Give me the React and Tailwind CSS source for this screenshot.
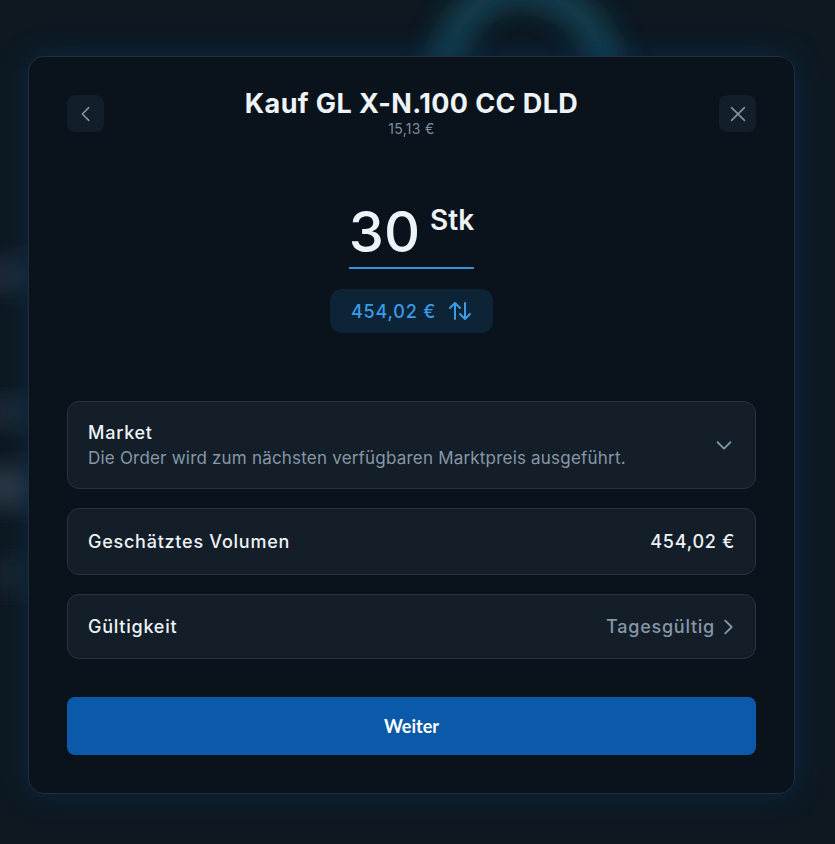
import React from 'react';

const font = { fontFamily: 'Inter, "Noto Sans", sans-serif' };

const App = () => {
  return (
    <div className="relative min-h-screen w-full overflow-hidden bg-[#0d1821]" style={font}>
      {/* Background glow decorations */}
      <div className="pointer-events-none absolute inset-0">
        <svg className="absolute left-0 top-0" width="835" height="844" viewBox="0 0 835 844">
          <defs>
            <filter id="blur" x="-50%" y="-50%" width="200%" height="200%">
              <feGaussianBlur stdDeviation="14" />
            </filter>
          </defs>
          <path d="M440 70 Q470 -20 530 -10 Q590 0 610 70" stroke="#124a5c" strokeWidth="30" fill="none" filter="url(#blur)" opacity="0.9" />
          <rect x="-20" y="260" width="50" height="30" fill="#2a3a48" filter="url(#blur)" opacity="0.7" />
          <rect x="-20" y="400" width="50" height="25" fill="#2a3a48" filter="url(#blur)" opacity="0.7" />
          <rect x="-20" y="470" width="50" height="35" fill="#3a4a58" filter="url(#blur)" opacity="0.8" />
          <rect x="-20" y="560" width="50" height="30" fill="#24323f" filter="url(#blur)" opacity="0.6" />
        </svg>
      </div>

      <div className="relative flex pl-[28px] pt-[56px]">
        <div className="w-[767px] rounded-2xl border border-[#1f2e3b] bg-[#0a131b] px-[38px] pb-[38px] pt-[38px] shadow-[0_0_30px_rgba(14,60,110,0.45)]">
          {/* Header */}
          <div className="flex items-start justify-between">
            <button className="flex h-[37px] w-[37px] items-center justify-center rounded-lg bg-[#121e2a] text-[#7f93a6]">
              <svg width="22" height="22" viewBox="0 0 24 24" fill="none" stroke="currentColor" strokeWidth="1.8" strokeLinecap="round" strokeLinejoin="round">
                <path d="M15 5l-7 7 7 7" />
              </svg>
            </button>
            <div className="-mt-[8px] flex flex-col items-center">
              <h1 className="text-[27px] font-bold leading-[34px] tracking-[0.4px] text-[#eef3f7]">Kauf GL X-N.100 CC DLD</h1>
              <div className="text-[14px] leading-[16px] tracking-[0.3px] text-[#7c8c9b]">15,13 €</div>
            </div>
            <button className="flex h-[37px] w-[37px] items-center justify-center rounded-lg bg-[#121e2a] text-[#7f93a6]">
              <svg width="22" height="22" viewBox="0 0 24 24" fill="none" stroke="currentColor" strokeWidth="1.8" strokeLinecap="round">
                <path d="M5 5l14 14M19 5L5 19" />
              </svg>
            </button>
          </div>

          {/* Amount */}
          <div className="mt-[64px] flex flex-col items-center">
            <div className="flex items-start border-b-2 border-[#3a8fdc] pb-[4px]">
              <span className="text-[56px] font-medium leading-[62px] text-[#eef3f7]">30</span>
              <span className="ml-[10px] mt-[2px] text-[28px] font-semibold leading-[34px] text-[#eef3f7]">Stk</span>
            </div>
            <div className="mt-[20px] flex h-[44px] items-center gap-[12px] rounded-xl bg-[#0d2436] px-[21px]">
              <span className="text-[18px] font-medium tracking-[0.8px] text-[#3a9be6]">454,02 €</span>
              <svg width="24" height="22" viewBox="0 0 24 22" fill="none" stroke="#3a9be6" strokeWidth="2" strokeLinecap="round" strokeLinejoin="round">
                <path d="M7 19V3M2 8l5-5 5 5" />
                <path d="M17 3v16M12 14l5 5 5-5" />
              </svg>
            </div>
          </div>

          {/* Cards */}
          <div className="mt-[68px] flex flex-col gap-[19px]">
            <div className="flex h-[88px] items-center justify-between rounded-xl border border-[#263441] bg-[#131e28] px-[20px]">
              <div className="flex flex-col">
                <span className="text-[18px] font-medium leading-[26px] tracking-[0.75px] text-[#eef3f7]">Market</span>
                <span className="text-[17px] leading-[24px] tracking-[0.2px] text-[#8797a7]">Die Order wird zum nächsten verfügbaren Marktpreis ausgeführt.</span>
              </div>
              <svg width="22" height="22" viewBox="0 0 24 24" fill="none" stroke="#7f93a6" strokeWidth="2" strokeLinecap="round" strokeLinejoin="round">
                <path d="M5 9l7 7 7-7" />
              </svg>
            </div>

            <div className="flex h-[67px] items-center justify-between rounded-xl border border-[#263441] bg-[#131e28] px-[20px]">
              <span className="text-[18px] font-medium tracking-[0.75px] text-[#eef3f7]">Geschätztes Volumen</span>
              <span className="text-[18px] font-medium tracking-[0.75px] text-[#eef3f7]">454,02 €</span>
            </div>

            <div className="flex h-[65px] items-center justify-between rounded-xl border border-[#263441] bg-[#131e28] px-[20px]">
              <span className="text-[18px] font-medium tracking-[0.75px] text-[#eef3f7]">Gültigkeit</span>
              <div className="-mr-[4px] flex items-center gap-[2px]">
                <span className="text-[18px] font-medium tracking-[0.75px] text-[#8797a7]">Tagesgültig</span>
                <svg width="22" height="22" viewBox="0 0 24 24" fill="none" stroke="#8797a7" strokeWidth="2" strokeLinecap="round" strokeLinejoin="round">
                  <path d="M9 5l7 7-7 7" />
                </svg>
              </div>
            </div>
          </div>

          <button className="mt-[38px] flex h-[58px] w-full items-center justify-center rounded-lg bg-[#0b59a9] text-[18px] font-bold text-white" style={{ fontFamily: 'Lato, sans-serif' }}>
            Weiter
          </button>
        </div>
      </div>
    </div>
  );
};

export default App;
